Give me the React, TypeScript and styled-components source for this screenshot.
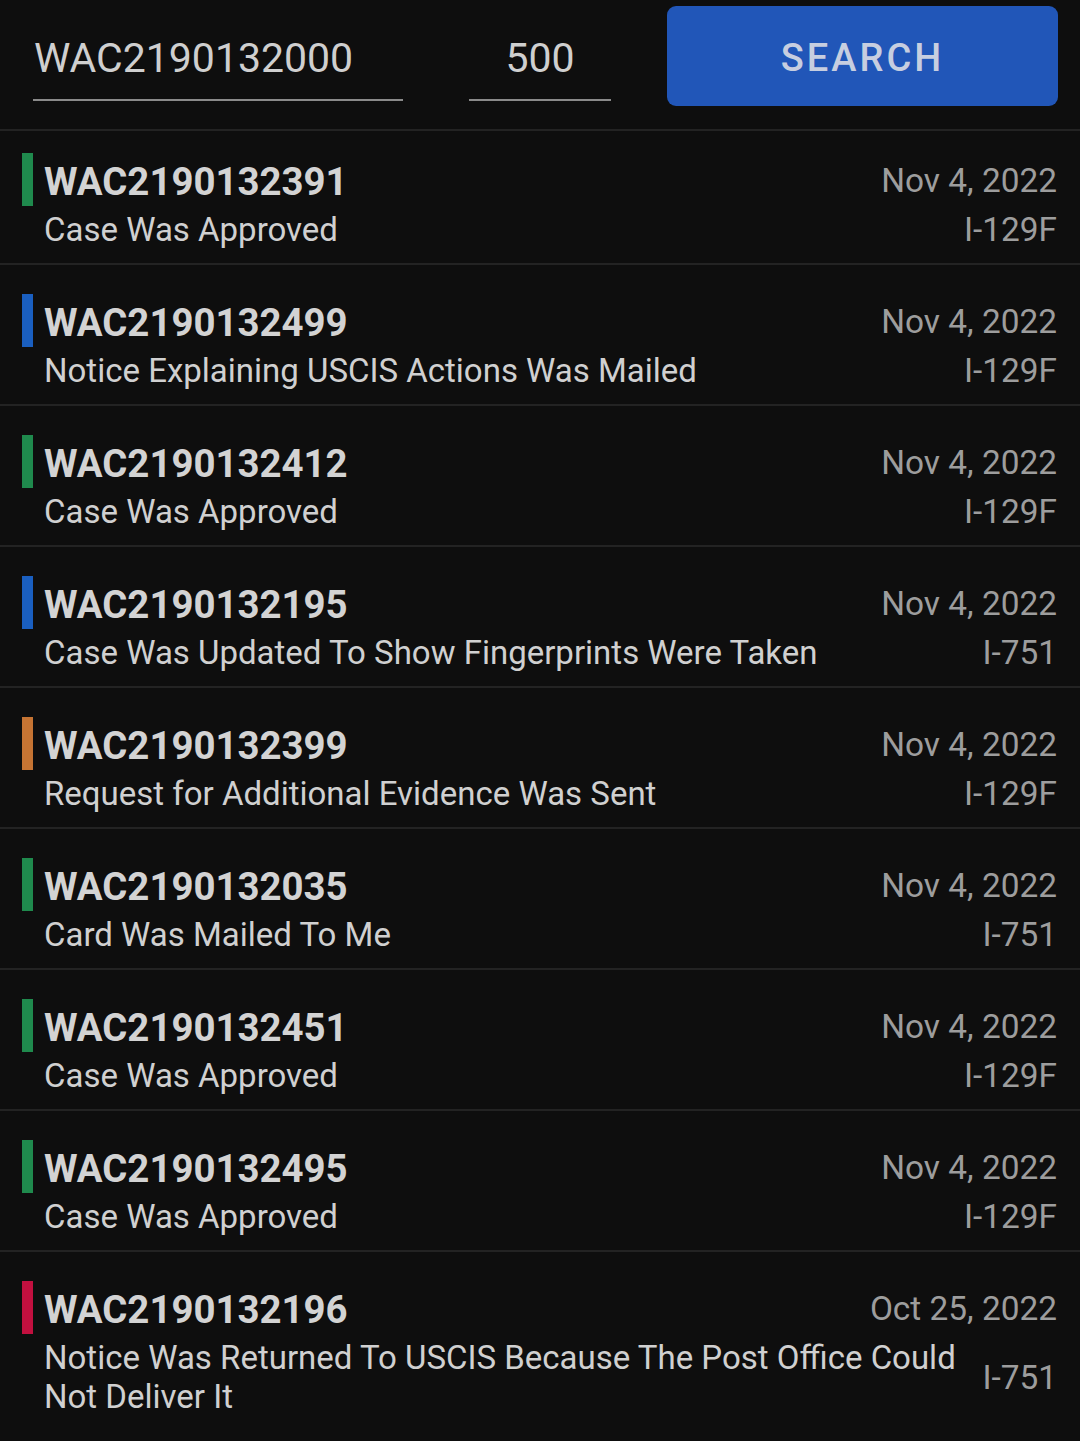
import React from 'react';
import styled, { createGlobalStyle } from 'styled-components';

const GlobalStyle = createGlobalStyle`
  html, body {
    margin: 0;
    padding: 0;
    background: #0e0e0e;
    overflow: hidden;
  }
  body {
    font-family: Roboto, "Liberation Sans", Arial, sans-serif;
  }
`;

const Screen = styled.div`
  width: 1080px;
  min-height: 1441px;
  background: #0e0e0e;
`;

const SearchBar = styled.div`
  display: flex;
  align-items: flex-start;
  padding: 6px 22px 23px 33px;
`;

const Field = styled.input<{ $width: number; $center?: boolean }>`
  box-sizing: border-box;
  width: ${(p) => p.$width}px;
  height: 95px;
  padding: 10px 0 0 ${(p) => (p.$center ? 0 : 1)}px;
  margin: 0;
  border: none;
  border-bottom: 2px solid #8a8a8a;
  background: transparent;
  outline: none;
  color: #cfcfcf;
  font-family: Roboto, "Liberation Sans", Arial, sans-serif;
  font-size: 41px;
  text-align: ${(p) => (p.$center ? 'center' : 'left')};
`;

const SearchButton = styled.button`
  box-sizing: border-box;
  width: 391px;
  height: 100px;
  margin-left: 56px;
  padding: 4px 0 0;
  border: none;
  border-radius: 9px;
  background: #2156b8;
  color: #c7cee0;
  font-family: Roboto, "Liberation Sans", Arial, sans-serif;
  font-size: 38px;
  font-weight: 500;
  letter-spacing: 3px;
  cursor: pointer;
`;

const CaseList = styled.div`
  display: flex;
  flex-direction: column;
`;

const CaseRow = styled.div`
  display: flex;
  align-items: flex-start;
  padding: 29px 23px 14px 22px;
  border-top: 2px solid #232323;

  &:first-child {
    padding-top: 22px;
  }
`;

const StatusBar = styled.div<{ $color: string }>`
  flex: none;
  width: 11px;
  height: 53px;
  margin-right: 11px;
  background: ${(p) => p.$color};
`;

const CaseBody = styled.div`
  flex: 1;
  min-width: 0;
  display: flex;
  flex-direction: column;
`;

const TopLine = styled.div`
  box-sizing: border-box;
  display: flex;
  align-items: flex-start;
  justify-content: space-between;
  height: 53px;
  padding-top: 4px;
`;

const CaseNumber = styled.div`
  color: #d3d3d3;
  font-size: 38.4px;
  font-weight: 700;
  line-height: 49px;
`;

const CaseDate = styled.div`
  color: #9d9d9d;
  font-size: 33.4px;
  line-height: 48px;
`;

const BottomLine = styled.div`
  display: flex;
  align-items: center;
  margin-top: 4px;
`;

const StatusText = styled.div`
  flex: 1;
  min-width: 0;
  color: #d0d0d0;
  font-size: 33px;
  line-height: 39px;
`;

const FormType = styled.div`
  flex: none;
  margin-left: 24px;
  color: #9d9d9d;
  font-size: 33.4px;
  line-height: 39px;
`;

const colors = {
  approved: '#1f8a4d',
  info: '#1a5fc0',
  evidence: '#c67433',
  returned: '#c2103f',
};

const cases = [
  { id: 'WAC2190132391', status: 'Case Was Approved', kind: 'approved', date: 'Nov 4, 2022', form: 'I-129F' },
  { id: 'WAC2190132499', status: 'Notice Explaining USCIS Actions Was Mailed', kind: 'info', date: 'Nov 4, 2022', form: 'I-129F' },
  { id: 'WAC2190132412', status: 'Case Was Approved', kind: 'approved', date: 'Nov 4, 2022', form: 'I-129F' },
  { id: 'WAC2190132195', status: 'Case Was Updated To Show Fingerprints Were Taken', kind: 'info', date: 'Nov 4, 2022', form: 'I-751' },
  { id: 'WAC2190132399', status: 'Request for Additional Evidence Was Sent', kind: 'evidence', date: 'Nov 4, 2022', form: 'I-129F' },
  { id: 'WAC2190132035', status: 'Card Was Mailed To Me', kind: 'approved', date: 'Nov 4, 2022', form: 'I-751' },
  { id: 'WAC2190132451', status: 'Case Was Approved', kind: 'approved', date: 'Nov 4, 2022', form: 'I-129F' },
  { id: 'WAC2190132495', status: 'Case Was Approved', kind: 'approved', date: 'Nov 4, 2022', form: 'I-129F' },
  {
    id: 'WAC2190132196',
    status: 'Notice Was Returned To USCIS Because The Post Office Could Not Deliver It',
    kind: 'returned',
    date: 'Oct 25, 2022',
    form: 'I-751',
  },
];

export default function App() {
  return (
    <Screen>
      <GlobalStyle />
      <SearchBar>
        <Field $width={370} defaultValue="WAC2190132000" />
        <Field $width={142} $center defaultValue="500" style={{ marginLeft: 66 }} />
        <SearchButton>SEARCH</SearchButton>
      </SearchBar>
      <CaseList>
        {cases.map((c) => (
          <CaseRow key={c.id}>
            <StatusBar $color={colors[c.kind as keyof typeof colors]} />
            <CaseBody>
              <TopLine>
                <CaseNumber>{c.id}</CaseNumber>
                <CaseDate>{c.date}</CaseDate>
              </TopLine>
              <BottomLine>
                <StatusText>{c.status}</StatusText>
                <FormType>{c.form}</FormType>
              </BottomLine>
            </CaseBody>
          </CaseRow>
        ))}
      </CaseList>
    </Screen>
  );
}
